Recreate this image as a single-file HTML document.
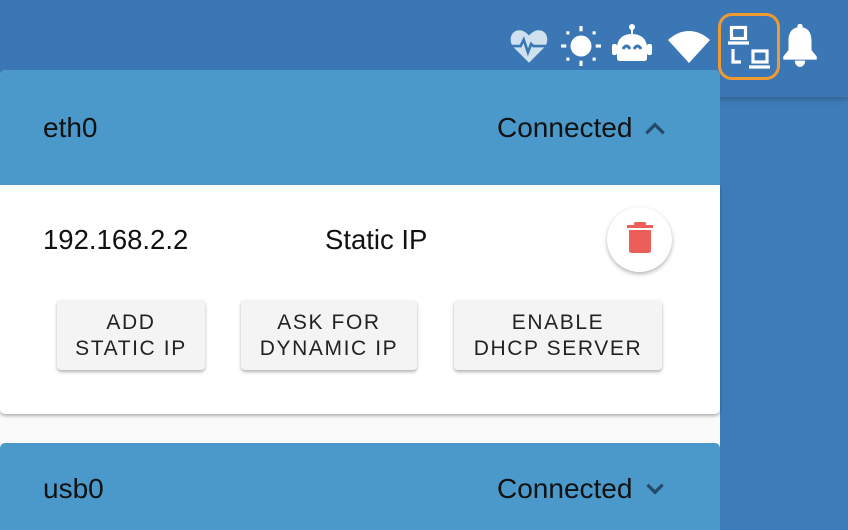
<!DOCTYPE html>
<html><head><meta charset="utf-8"><style>
*{margin:0;padding:0;box-sizing:border-box}
body{width:848px;height:530px;overflow:hidden;background:#3d7cb9;font-family:"Liberation Sans",sans-serif;position:relative}
.top{position:absolute;left:0;top:0;width:848px;height:97px;background:#3a77b4;box-shadow:0 2px 6px rgba(0,0,0,.25)}
.panel{position:absolute;left:0;top:70px;width:720px;height:460px;background:#fafafa;border-radius:6px 6px 0 0}
.hdr{position:absolute;left:0;width:720px;background:#4b99cb;color:#111;font-size:28px}
.hdr .l{position:absolute;left:43px}
.hdr .r{position:absolute;left:497px}
.body{position:absolute;left:0;top:185px;width:720px;height:229px;background:#fff;border-radius:0 0 5px 5px;box-shadow:0 2px 3px rgba(0,0,0,.3)}
.btn{position:absolute;top:115px;height:70px;background:#f4f4f4;border-radius:4px;box-shadow:0 2px 3px rgba(0,0,0,.3);text-align:center;font-size:21px;letter-spacing:1.6px;line-height:26px;padding-top:10px;color:#222;white-space:nowrap}
.icons svg{position:absolute}
</style></head><body>
<div class="top"></div>
<div class="icons">
<svg style="left:508px;top:25px" width="42" height="42" viewBox="0 0 40 40"><path d="M20 36 L5 21 C0 14 3 5 11 5 C15 5 18 8 20 10 C22 8 25 5 29 5 C37 5 40 14 35 21 Z" fill="#cfe0ef"/><path d="M3 20 H12 L15 14 L19 26 L22 18 L24 20 H37" stroke="#3a77b4" stroke-width="2.5" fill="none"/></svg>
<svg style="left:560px;top:25px" width="42" height="42" viewBox="0 0 40 40" fill="#fff"><circle cx="20" cy="20" r="10"/><rect x="18.5" y="1" width="3" height="5"/><rect x="18.5" y="34" width="3" height="5"/><rect x="1" y="18.5" width="5" height="3"/><rect x="34" y="18.5" width="5" height="3"/><rect x="6" y="6" width="3" height="3"/><rect x="31" y="6" width="3" height="3"/><rect x="6" y="31" width="3" height="3"/><rect x="31" y="31" width="3" height="3"/></svg>
<svg style="left:611px;top:22px" width="42" height="44" viewBox="0 0 42 44"><circle cx="21" cy="5" r="3" fill="#fff"/><rect x="20" y="6" width="2" height="6" fill="#fff"/><path d="M6 26 C6 17 12 12 21 12 C30 12 36 17 36 26 V36 C36 38 35 39 33 39 H9 C7 39 6 38 6 36 Z" fill="#fff"/><rect x="1" y="22" width="5" height="11" rx="2" fill="#fff"/><rect x="36" y="22" width="5" height="11" rx="2" fill="#fff"/><path d="M12 27 Q15.5 21 19 27 M23 27 Q26.5 21 30 27" stroke="#3a77b4" stroke-width="3" fill="none"/></svg>
<svg style="left:667px;top:26px" width="44" height="40" viewBox="0 0 44 40"><path d="M1 14 C14 2 30 2 43 14 L22 37 Z" fill="#fff"/></svg>
<div style="position:absolute;left:718px;top:13px;width:62px;height:67px;border:3px solid #ef9a32;border-radius:14px"></div>
<svg style="left:724px;top:22px" width="50" height="50" viewBox="0 0 50 50" fill="none" stroke="#fff" stroke-width="3.2"><rect x="7.5" y="5.5" width="14" height="11"/><path d="M4 21 H25"/><path d="M9 27 V40 H17"/><rect x="29" y="29" width="14" height="11"/><path d="M25 45 H46"/></svg>
<svg style="left:781px;top:23px" width="38" height="46" viewBox="0 0 36 44" fill="#fff"><path d="M18 4 C10 4 7 10 7 17 V26 L2 32 V35 H34 V32 L29 26 V17 C29 10 26 4 18 4 Z"/><rect x="15.5" y="1" width="5" height="6" rx="2"/><path d="M13 36 H23 C23 39 21 42 18 42 C15 42 13 39 13 36 Z"/></svg>
</div>
<div class="panel"></div>
<div class="hdr" style="top:70px;height:115px;border-radius:6px 6px 0 0"><span class="l" style="top:42px">eth0</span><span class="r" style="top:42px">Connected</span>
<svg style="position:absolute;left:642px;top:46px" width="26" height="26" viewBox="0 0 24 24"><path d="M4 16 L12 8 L20 16" stroke="#254a66" stroke-width="3" fill="none"/></svg></div>
<div class="body">
<div style="position:absolute;left:43px;top:39px;font-size:27.5px;color:#111">192.168.2.2</div>
<div style="position:absolute;left:325px;top:39px;font-size:27.5px;color:#111">Static IP</div>
<div style="position:absolute;left:607px;top:22px;width:65px;height:65px;border-radius:50%;background:#fff;box-shadow:0 2px 4px rgba(0,0,0,.3)">
<svg style="position:absolute;left:18px;top:14px" width="30" height="36" viewBox="0 0 28 36" fill="#ec5f59"><rect x="1" y="4" width="26" height="3"/><rect x="8" y="1" width="12" height="3.5" rx="1.5"/><path d="M3 9 H25 V29 C25 31 24 32 22 32 H6 C4 32 3 31 3 29 Z"/></svg></div>
<div class="btn" style="left:57px;width:148px">ADD<br>STATIC IP</div>
<div class="btn" style="left:241px;width:176px">ASK FOR<br>DYNAMIC IP</div>
<div class="btn" style="left:454px;width:208px">ENABLE<br>DHCP SERVER</div>
</div>
<div class="hdr" style="top:443px;height:87px;border-radius:5px 5px 0 0"><span class="l" style="top:30px">usb0</span><span class="r" style="top:30px">Connected</span>
<svg style="position:absolute;left:642px;top:32px" width="26" height="26" viewBox="0 0 24 24"><path d="M5 9 L12 16 L19 9" stroke="#254a66" stroke-width="3" fill="none"/></svg></div>
</body></html>
